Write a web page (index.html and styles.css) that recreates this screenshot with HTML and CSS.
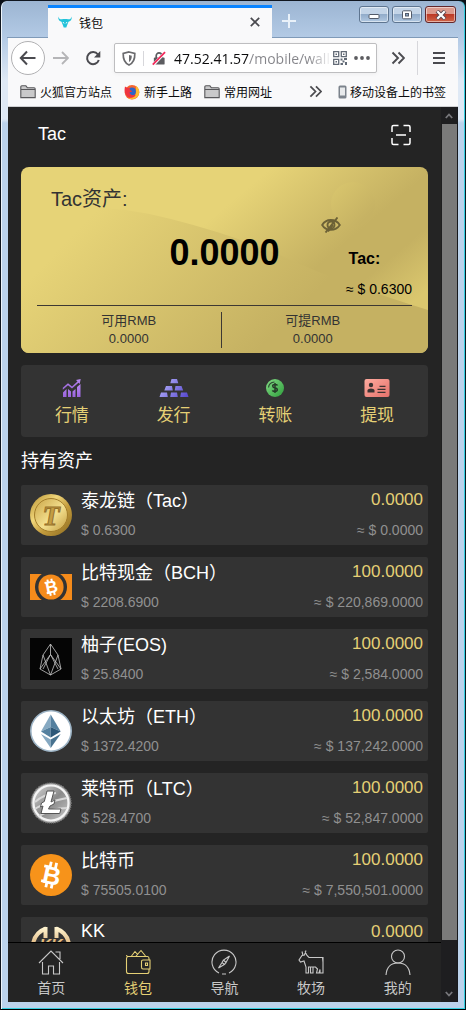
FILE: index.html
```html
<!DOCTYPE html>
<html lang="zh-CN">
<head>
<meta charset="utf-8">
<meta name="viewport" content="width=device-width, initial-scale=1">
<title>钱包</title>
<link rel="stylesheet" href="styles.css">
</head>
<body>
<svg class="defs" width="0" height="0" aria-hidden="true">
  <defs>
    <linearGradient id="purple" x1="0" y1="0" x2="0" y2="1"><stop offset="0" stop-color="#b98af0"/><stop offset="1" stop-color="#9a63dd"/></linearGradient>
    <linearGradient id="violet" gradientUnits="userSpaceOnUse" x1="2" y1="2" x2="28" y2="20"><stop offset="0" stop-color="#b5b2fa"/><stop offset="1" stop-color="#5748cf"/></linearGradient>
    <linearGradient id="green" x1="0" y1="0" x2="1" y2="1"><stop offset="0" stop-color="#84dc86"/><stop offset="1" stop-color="#2f9e3c"/></linearGradient>
    <linearGradient id="coral" x1="0" y1="0" x2="1" y2="1"><stop offset="0" stop-color="#ffab9f"/><stop offset="1" stop-color="#e4716b"/></linearGradient>
    <linearGradient id="gold" x1="0" y1="0" x2="1" y2="1"><stop offset="0" stop-color="#b18a2c"/><stop offset=".35" stop-color="#f0d67a"/><stop offset=".6" stop-color="#c39b3c"/><stop offset="1" stop-color="#8a6a20"/></linearGradient>
    <linearGradient id="gold-in" x1="0" y1="0" x2="1" y2="1"><stop offset="0" stop-color="#c9a446"/><stop offset=".55" stop-color="#f4e08f"/><stop offset="1" stop-color="#c39c3e"/></linearGradient>
    <linearGradient id="cream" gradientUnits="userSpaceOnUse" x1="0" y1="2" x2="0" y2="24"><stop offset="0" stop-color="#fff3cf"/><stop offset="1" stop-color="#d7a566"/></linearGradient>
    <linearGradient id="silver" x1="0" y1="0" x2="1" y2="1"><stop offset="0" stop-color="#d5d5d5"/><stop offset=".5" stop-color="#8a8a8a"/><stop offset="1" stop-color="#c9c9c9"/></linearGradient>
    <linearGradient id="card-wave" gradientUnits="userSpaceOnUse" x1="60" y1="60" x2="210" y2="210"><stop offset="0" stop-color="#e6d377"/><stop offset="1" stop-color="#c5b162"/></linearGradient>
    <linearGradient id="card-disc" x1="0" y1="0" x2=".8" y2=".8"><stop offset="0" stop-color="#dac76e"/><stop offset="1" stop-color="#c6b263"/></linearGradient>
    <symbol id="folder" viewBox="0 0 16 14"><path d="M.8 12.6V1.900q0-1.100 1.100-1.100h4l1.500 2h6.700q1.100 0 1.100 1.100v8.700zM1 4.500h14" fill="#c9c9ca" stroke="#58585b" stroke-width="1.100"/></symbol>
    <symbol id="chevrons" viewBox="0 0 14 14"><path d="M1.500 1.500 7 7l-5.500 5.500M7.500 1.500 13 7l-5.500 5.500" fill="none" stroke="#4c4c50" stroke-width="1.900"/></symbol>
  </defs>
</svg>

<div class="window">
  <header class="titlebar">
    <div class="tab">
      <svg class="tab-icon" viewBox="0 0 14 12"><path d="M.3.500C1 3.500 3 3.600 5 3h4c2 .6 4 .5 4.700-2.500.3 2.700-.5 4.500-3.200 5.200L9 9.500 8.300 11.600H5.700L5 9.500 3.500 5.700C.8 5 0 3.200.3.500z" fill="#22c3da"/><path d="m5 6 1 1.500M9 6 8 7.500" stroke="#f9f9fa"/></svg>
      <span class="tab-title">钱包</span>
      <button class="plain" aria-label="关闭标签页"><svg width="10" height="10" viewBox="0 0 10 10"><path d="m.8.8 8.400 8.400M9.200.8.800 9.200" stroke="#4a4a4f" stroke-width="1.700"/></svg></button>
    </div>
    <button class="plain new-tab" aria-label="新建标签页"><svg width="14" height="14" viewBox="0 0 14 14"><path d="M7 0v14M0 7h14" stroke="#e9f1f9" stroke-width="2"/></svg></button>
    <div class="win-buttons">
      <button class="win-btn" aria-label="最小化"><svg width="12" height="10" viewBox="0 0 12 10"><rect x="1" y="4.500" width="10" height="4" rx="1" fill="#fff" stroke="#535b69"/></svg></button>
      <button class="win-btn" aria-label="最大化"><svg width="12" height="10" viewBox="0 0 12 10"><rect x="1.500" y=".8" width="9" height="8" rx="1" fill="#fff" stroke="#535b69"/><rect x="4.500" y="3.500" width="3" height="2.500" fill="#8ba5c4" stroke="#535b69"/></svg></button>
      <button class="win-btn win-close" aria-label="关闭"><svg width="12" height="10" viewBox="0 0 12 10"><path d="m2 1 8 8M10 1 2 9" stroke="#5a4750" stroke-width="4"/><path d="m2.300 1.300 7.400 7.400m0-7.400L2.300 8.700" stroke="#fff" stroke-width="2.200"/></svg></button>
    </div>
  </header>

  <div class="toolbar">
    <button class="plain back" aria-label="后退"><svg width="18" height="16" viewBox="0 0 18 16"><path d="M8 1.500 1.800 8 8 14.500M2 8h14.500" fill="none" stroke="#4a4a4f" stroke-width="2"/></svg></button>
    <button class="plain forward" aria-label="前进"><svg width="16" height="14" viewBox="0 0 16 14"><path d="M9 1l6 6-6 6M14.500 7H0" fill="none" stroke="#b5b5b7" stroke-width="1.800"/></svg></button>
    <button class="plain reload" aria-label="刷新"><svg width="16" height="16" viewBox="0 0 16 16"><path d="M12.900 4.500A6 6 0 1 0 13.800 10" fill="none" stroke="#4a4a4f" stroke-width="2"/><path d="M15.300 1v6.400H9z" fill="#4a4a4f"/></svg></button>
    <div class="url-box">
      <svg class="shield" viewBox="0 0 14 15"><path d="M7 1 12.800 2.500c.2 6-1.300 9.500-5.800 11.500C2.500 12 1 8.500 1.200 2.500z" fill="none" stroke="#6a6a6d" stroke-width="1.700"/><path d="M7 4v7c2-1.200 2.700-3 2.800-6.200z" fill="#6a6a6d"/></svg>
      <svg class="lock" viewBox="0 0 15 15"><path d="M4.500 7V4.500a3 3 0 0 1 6 0V7" fill="none" stroke="#5c5c60" stroke-width="1.800"/><rect x="2" y="6.500" width="11.500" height="7.500" rx="1" fill="#5c5c60"/><path d="M1.200 14.500 14 1" stroke="#fff" stroke-width="3.200"/><path d="M.8 14 14 .8" stroke="#f2285a" stroke-width="1.900"/></svg>
      <input class="url" type="text" aria-label="地址" value="47.52.41.57/mobile/wallet">
      <svg class="qr" viewBox="0 0 14 14"><g fill="none" stroke="#626a76" stroke-width="1.300"><path d="M.7.700h5v5h-5zM8.300.700h5v5h-5zM.7 8.300h5v5h-5z"/></g><path d="M2.500 2.500h1.500v1.500H2.500zM10 2.500h1.500v1.500H10zM2.500 10h1.500v1.500H2.500zM7.500 7.500h2v2h-2zM11 7h3v2h-3zM9.500 9.500h2v2h-2zM12 11h2v3h-2zM7.500 12h2.500v2H7.500z" fill="#626a76"/></svg>
      <svg class="dots" viewBox="0 0 16 4"><g fill="#5c5c60"><circle cx="2" cy="2" r="1.900"/><circle cx="8" cy="2" r="1.900"/><circle cx="14" cy="2" r="1.900"/></g></svg>
    </div>
    <button class="plain overflow" aria-label="更多工具"><svg width="14" height="14"><use href="#chevrons"/></svg></button>
    <button class="plain menu-btn" aria-label="打开菜单"><svg width="12" height="12" viewBox="0 0 12 12"><path d="M0 1h12M0 6h12M0 11h12" stroke="#4a4a4f" stroke-width="1.800"/></svg></button>
  </div>

  <nav class="bookmarks">
    <a href="#"><svg width="16" height="14"><use href="#folder"/></svg>火狐官方站点</a>
    <a href="#"><svg width="16" height="16" viewBox="0 0 16 16"><circle cx="8" cy="8.300" r="7.300" fill="#f6642f"/><path d="M12 1.800c3.500 2.600 4.600 8 1 11.500-2.500 2.400-7 2.700-9.500.3 5 1.200 9-2 8.500-6.500z" fill="#fdbb30"/><circle cx="8" cy="7.500" r="3.900" fill="#2d65c8"/><path d="M1 2.500c-.9 4-.5 8 3.500 11 4 1 6.500-.8 7.200-2.800-3 1-5.700.3-6.200-2.200 1-.8 2-.5 2.800-1.300L6 6 5.500 3.800 3.500 4z" fill="#ef343f"/></svg>新手上路</a>
    <a href="#"><svg width="16" height="14"><use href="#folder"/></svg>常用网址</a>
    <button class="plain more-marks" aria-label="更多书签"><svg width="13" height="13"><use href="#chevrons"/></svg></button>
    <a class="mobile-marks" href="#"><svg width="9" height="14" viewBox="0 0 9 14"><rect x=".5" y=".5" width="8" height="13" rx="1.500" fill="#7c838c"/><path d="M2 2.500h5v8H2z" fill="#e8eaec"/></svg>移动设备上的书签</a>
  </nav>

  <div class="viewport">
    <main class="page">
      <div class="content">
        <div class="page-head">
          <h1>Tac</h1>
          <button class="plain" aria-label="扫一扫"><svg width="20" height="22" viewBox="0 0 20 22"><path d="M1 8V3Q1 1.500 2.500 1.500h5M12.500 1.500h5Q19 1.500 19 3v5M19 14v5q0 1.500-1.500 1.500h-5M7.500 20.500h-5Q1 20.500 1 19v-5" fill="none" stroke="#fff" stroke-width="1.500"/><path d="M5 11h10" stroke="#ccc" stroke-width="2"/></svg></button>
        </div>

        <section class="card">
          <svg class="card-art" viewBox="0 0 407 186" preserveAspectRatio="none" aria-hidden="true"><circle cx="332" cy="37" r="22" fill="url(#card-disc)"/><path d="M0 42Q80 34 150 52T270 93 407 143V186H0z" fill="url(#card-wave)"/></svg>
          <h2>Tac资产:</h2>
          <div class="card-main">
            <strong class="total">0.0000</strong>
            <div class="rate">
              <button class="plain eye" aria-label="隐藏余额"><svg width="20" height="16" viewBox="0 0 20 16"><g fill="none" stroke="#6c6136" stroke-width="1.900"><path d="M1.200 8C5 1.300 14.500 1.300 18.800 8 14.500 14.500 5 14.500 1.200 8z"/><circle cx="10" cy="8" r="3.500"/><path d="M4.500 15.500 16.500.5M7 14.500 12 8"/></g></svg></button>
              <b>Tac:</b>
              <span>≈ $ 0.6300</span>
            </div>
          </div>
          <dl class="card-foot">
            <div><dt>可用RMB</dt><dd>0.0000</dd></div>
            <div><dt>可提RMB</dt><dd>0.0000</dd></div>
          </dl>
        </section>

        <nav class="actions">
          <a href="#"><svg width="20" height="20" viewBox="0 0 20 20"><g fill="url(#purple)"><path d="M1 14.500 4.500 11v8H1zM6 11l3 2.500V19H6zM10.500 13.500 13.500 11v8h-3zM15 9l3.500-3v13H15z"/><path d="M.8 9.800 6 5.200l4 3.300 5.500-5L14 2l4.700-1-1 5-1.200-1.200L10 10.500 6 7.300.8 11.800z"/></g></svg>行情</a>
          <a href="#"><svg width="30" height="20" viewBox="0 0 30 20"><path d="M12.500 1h5.500l1.300 4.300h-8zM7 8h6l.8 4.500H5.300zM16.500 8h6l1.700 4.500h-8.500zM2 14.500h6l.8 4.500H.5zM12 14.500h6l.8 4.500h-7.600zM22 14.500h6l1.500 4.500h-8.300z" fill="url(#violet)"/></svg>发行</a>
          <a href="#"><svg width="20" height="20" viewBox="0 0 20 20"><circle cx="10" cy="10" r="9" fill="url(#green)"/><path d="M3.500 9.500Q4 4.500 9.500 4" fill="none" stroke="#2f4a33" stroke-width="1.200"/><path d="M12.500 7.500Q12 6.500 10 6.500c-3.200 0-3 3 0 3.400 3.200.4 3 3.600 0 3.600q-2 0-2.600-1.200M10 5v10" fill="none" stroke="#263b29" stroke-width="1.500"/></svg>转账</a>
          <a href="#"><svg width="26" height="20" viewBox="0 0 26 20"><rect x=".5" y="1" width="25" height="18" rx="2" fill="url(#coral)"/><g fill="#3a3232"><circle cx="7" cy="7" r="2.200"/><path d="M3.500 14.500v-2.500Q4 10.500 7 10.500t3.500 1.500v2.500z"/></g><path d="M15.500 8.300h6M13.500 11.300h8M13.500 14.300h8" stroke="#3a3232" stroke-width="1.300"/></svg>提现</a>
        </nav>

        <h3>持有资产</h3>
        <ul class="assets">
          <li>
            <svg class="coin" viewBox="0 0 42 42"><circle cx="21" cy="21" r="21" fill="url(#gold)"/><circle cx="21" cy="21" r="16.500" fill="url(#gold-in)" stroke="#a37d2a"/><text x="21" y="31" class="coin-t">T</text></svg>
            <span class="name">泰龙链（Tac）</span><span class="amount">0.0000</span>
            <span class="price">$ 0.6300</span><span class="value">≈ $ 0.0000</span>
          </li>
          <li>
            <svg class="coin" viewBox="0 0 42 42"><path d="M0 8h42v26H0z" fill="#f58b1b"/><circle cx="21" cy="21" r="16" fill="#333"/><path d="M12.500 5h17v3h-17zM12.500 34h17v3h-17z" fill="#333"/><circle cx="21" cy="21" r="12.600" fill="#f58b1b"/><g transform="rotate(-12 21 21)" stroke="#fff" stroke-width="2"><text x="21.500" y="27" class="coin-b small">B</text><path d="M19 13v3M23 13v3M19 26v3.500M23 26v3.500M15.500 15.800h3M15.500 26.200h3"/></g></svg>
            <span class="name">比特现金（BCH）</span><span class="amount">100.0000</span>
            <span class="price">$ 2208.6900</span><span class="value">≈ $ 220,869.0000</span>
          </li>
          <li>
            <svg class="coin" viewBox="0 0 42 42"><path d="M0 0h42v42H0z" fill="#050505"/><path d="M20.500 6 13 17l-3 14 10.500 6L31 31l-3-14zM13 17l7.500 20L28 17M20.500 6v10.500M20.500 16.500 13 31M20.500 16.500 28 31M10 31l10.500-14.500L31 31" fill="none" stroke="#c4c4c4" stroke-width=".8"/></svg>
            <span class="name">柚子(EOS)</span><span class="amount">100.0000</span>
            <span class="price">$ 25.8400</span><span class="value">≈ $ 2,584.0000</span>
          </li>
          <li>
            <svg class="coin" viewBox="0 0 42 42"><circle cx="21" cy="21" r="20.200" fill="#fff" stroke="#9db4c6" stroke-width="1.600"/><path d="M20.700 4.500 11 21.500l9.700-4.500z" fill="#86a9c2"/><path d="M20.700 4.500v12.500l10 4.500z" fill="#54809f"/><path d="m11 21.500 9.700-4.500v10.500z" fill="#54809f"/><path d="m30.700 21.500-10-4.500v10.500z" fill="#2e5878"/><path d="m11 24 9.700 5.500V38z" fill="#86a9c2"/><path d="m30.700 24-10 5.500V38z" fill="#47728f"/></svg>
            <span class="name">以太坊（ETH）</span><span class="amount">100.0000</span>
            <span class="price">$ 1372.4200</span><span class="value">≈ $ 137,242.0000</span>
          </li>
          <li>
            <svg class="coin" viewBox="0 0 42 42"><circle cx="21" cy="21" r="20" fill="#aaa" stroke="#777" stroke-width="1.500" stroke-dasharray="1 1"/><circle cx="21" cy="21" r="17.500" fill="url(#silver)" stroke="#f4f4f4" stroke-width="2.200"/><path d="M5 20q9-8 21-9M5 27q8-6 32-11M9 34q13-8 28-8" fill="none" stroke="#d8d8d8" stroke-width="2"/><path d="M17 9h7l-3 11 4-2-1 4-4 2-1.500 3H31l-1.300 4.500H11l2-7.500-2.500 1 1-4 2.800-1.500z" fill="#fff" stroke="#555"/></svg>
            <span class="name">莱特币（LTC）</span><span class="amount">100.0000</span>
            <span class="price">$ 528.4700</span><span class="value">≈ $ 52,847.0000</span>
          </li>
          <li>
            <svg class="coin" viewBox="0 0 42 42"><circle cx="21" cy="21" r="21" fill="#f7931a"/><g transform="rotate(12 21 21)" stroke="#fff" stroke-width="2.800"><text x="22" y="30" class="coin-b">B</text><path d="M18.500 8v6M24 8v6M18.500 28v6M24 28v6M12.500 13.500h5M12.500 28.600h5"/></g></svg>
            <span class="name">比特币</span><span class="amount">100.0000</span>
            <span class="price">$ 75505.0100</span><span class="value">≈ $ 7,550,501.0000</span>
          </li>
          <li>
            <svg class="coin" viewBox="0 0 42 42"><path d="M15.500 1v11M26.500 1v11M16 2.500A20 20 0 0 0 3 18M26 2.500A20 20 0 0 1 39 18" fill="none" stroke="url(#cream)" stroke-width="4"/><text x="21" y="25" class="coin-k">KK</text></svg>
            <span class="name">KK</span><span class="amount">0.0000</span>
            <span class="price">$ 0.0000</span><span class="value">≈ $ 0.0000</span>
          </li>
        </ul>
      </div>

      <nav class="tabbar">
        <a href="#"><svg viewBox="0 0 26 26"><path d="M1 14 13 2l12 12M17.500 3h4.500v7M4.500 13v12h6v-8h5v8h6V13" /></svg>首页</a>
        <a href="#" class="active"><svg viewBox="0 0 26 26"><path d="M24 11V9.500Q24 7.500 22.500 7.500H3Q1.500 7.500 1.500 6M3 7.500Q1.500 8 1.500 9.500V22.500Q1.500 24.500 3.500 24.500H22q2 0 2-2V20M25 11h-7q-1.500 0-1.500 1.500v5.500q0 2 1.500 2h7zM20.500 14h2v2.500h-2zM6.500 7 10 2.500 13 6M11 7l5-5.500L20.500 7"/></svg>钱包</a>
        <a href="#"><svg viewBox="0 0 26 26"><path d="M8 24A12 12 0 1 1 18 24M11 25h4M18.500 7 12.500 11l2.500 2.500zM7.500 19l3.500-5.500 2.500 2zM11 13.500l1.500-2.500M13.500 15.500l1.500-2"/></svg>导航</a>
        <a href="#"><svg viewBox="0 0 26 26"><path d="M8 1.500 6.500 6 4 6.500 1 11l1.500 2L6 12l2 6v6h2.500v-6h7l2 2-1 4h2.500l1-3.500V24h3V8.500H11L9 6.500 7 2.500M4 2.500l1 4M12.500 18v6H15v-6M24.500 8.500l.5 5"/></svg>牧场</a>
        <a href="#"><svg viewBox="0 0 26 26"><circle cx="13" cy="7.500" r="6.500"/><path d="M1 26Q2 14 13 14t12 12"/></svg>我的</a>
      </nav>
    </main>
    <div class="scrollbar" aria-hidden="true">
      <span class="arrow"><svg width="8" height="6" viewBox="0 0 8 6"><path d="m.8 5 3.200-3.500L7.200 5" fill="none" stroke="#77777b" stroke-width="1.800"/></svg></span>
      <span class="thumb"></span>
      <span class="track"></span>
      <span class="arrow"><svg width="8" height="6" viewBox="0 0 8 6"><path d="m.8 1 3.200 3.500L7.200 1" fill="none" stroke="#77777b" stroke-width="1.800"/></svg></span>
    </div>
  </div>
</div>
</body>
</html>
```
FILE: styles.css
```css
* { box-sizing: border-box; }

body {
  margin: 0;
  background: #0a0f16;
  color: #fff;
  font-family: "Liberation Sans", "Noto Sans CJK SC", sans-serif;
}

h1, h2, h3, dl, dd, ul { margin: 0; padding: 0; font-weight: 400; }
a { color: inherit; text-decoration: none; }
svg { display: block; flex: none; }
.defs { position: absolute; }

.plain {
  display: flex;
  align-items: center;
  justify-content: center;
  padding: 0;
  border: 0;
  background: none;
}

/* Window frame */
.window {
  display: flex;
  flex-direction: column;
  height: 100vh;
  padding: 0 7px 7px 6px;
  border: 1px solid #10161f;
  border-right-color: #0b1a22;
  border-bottom: 1px solid #000;
  border-radius: 7px 7px 0 0;
  background: linear-gradient(#9cb5d2, #b4cbe6 38px, #dfe9f5 80px, #dfe9f5 118px, #bcd3ec 122px, #bcd3ec);
  box-shadow: inset 1px 0 #eef5fb, inset -1px 0 #35cfe0, inset 0 -1px #35cfe0;
}

.titlebar {
  display: flex;
  flex: none;
  height: 37px;
  padding-top: 4px;
  padding-left: 41px;
  border-bottom: 1px solid #7f9ab8;
  color: #0c0c0d;
}

.tab {
  display: flex;
  align-items: center;
  flex: 0 1 224px;
  gap: 7px;
  height: 33px;
  padding: 0 12px 2px 10px;
  border-top: 3px solid #0a84ff;
  background: #f9f9fa;
  font-size: 12px;
}
.tab-icon { width: 14px; height: 12px; }
.tab-title { flex: 1; }
.new-tab { align-self: center; width: 34px; }

.win-buttons {
  display: flex;
  gap: 3px;
  margin-left: auto;
  padding: 1px 2px 0 0;
}
.win-btn {
  display: flex;
  align-items: center;
  justify-content: center;
  width: 30px;
  height: 17px;
  padding: 0;
  border: 1px solid #5e7590;
  border-radius: 3px;
  background: linear-gradient(#c3d4e7 48%, #92acca 50%, #b1c8e1);
  box-shadow: inset 0 0 0 1px #ffffff80;
}
.win-close { width: 31px; border-color: #64262a; background: linear-gradient(#dc9a8d 48%, #bd3a26 50%, #cf6549); }

.toolbar {
  display: flex;
  align-items: center;
  flex: none;
  height: 41px;
  margin-left: 1px;
  padding: 0 13px 1px 3px;
  background: #f9f9fa;
}
.back {
  flex: none;
  width: 34px;
  height: 34px;
  border: 1px solid #b1b1b3;
  border-radius: 50%;
  background: #fff;
}
.forward { width: 16px; margin-left: 8px; }
.reload { width: 16px; margin: 0 13px 0 16px; }

.url-box {
  display: flex;
  align-items: center;
  flex: 1;
  min-width: 0;
  height: 30px;
  padding: 0 6px 0 7px;
  border: 1px solid #bebec0;
  border-radius: 2px;
  background: #fff;
  box-shadow: 0 1px 4px #0000000d;
}
.shield { width: 14px; height: 15px; }
.lock { width: 23px; height: 15px; margin-left: 7px; padding-left: 8px; border-left: 1px solid #d7d7db; }
.url {
  flex: 1;
  min-width: 0;
  height: 26px;
  margin: 0 0 0 8px;
  padding: 0;
  border: 0;
  outline: 0;
  background: linear-gradient(90deg, #0c0c0d 75px, #85858a 75px, #85858a 135px, #85858a00 158px);
  background-clip: text;
  -webkit-background-clip: text;
  color: transparent;
  font: 14px "Open Sans", sans-serif;
}
.qr { width: 14px; height: 14px; }
.dots { width: 16px; height: 4px; margin-left: 7px; }
.overflow { width: 14px; margin-left: 14px; }
.menu-btn { height: 34px; margin-left: 12px; padding-left: 15px; border-left: 1px solid #d7d7db; }

.bookmarks {
  display: flex;
  align-items: center;
  flex: none;
  gap: 12px;
  height: 28px;
  margin-left: 1px;
  padding: 0 12px 2px 12px;
  border-bottom: 1px solid #cfd0d2;
  background: #f9f9fa;
  color: #0c0c0d;
  font-size: 12px;
  white-space: nowrap;
}
.bookmarks a { display: flex; align-items: center; gap: 4px; }
.more-marks { margin-left: auto; }
.bookmarks .mobile-marks { gap: 3px; margin-left: 4px; }

/* Page viewport */
.viewport {
  display: flex;
  flex: 1;
  min-height: 0;
  margin-left: 1px;
  border-right: 1px solid #17191d;
  background: #242424;
}
.page { display: flex; flex-direction: column; flex: 1; min-width: 0; }
.content { flex: 1; min-height: 0; overflow: hidden; padding: 0 13px; }

.scrollbar {
  display: flex;
  flex-direction: column;
  flex: none;
  width: 16px;
  background: #1e1e20;
}
.arrow { display: flex; align-items: center; justify-content: center; flex: none; height: 17px; }
.thumb { flex: 816; margin-left: 1px; background: #7a7a7a; }
.track { flex: 45; }

.page-head {
  display: flex;
  align-items: center;
  justify-content: space-between;
  height: 60px;
  padding: 0 17px;
}
.page-head h1 { padding-bottom: 6px; font-size: 18px; }
.page-head button { padding-bottom: 4px; }

.card {
  position: relative;
  z-index: 0;
  height: 186px;
  padding: 16px;
  overflow: hidden;
  border-radius: 8px;
  background: linear-gradient(140deg, #e6d377 40%, #c5b162 66%, #c5b162 76%, #dac76e 88%);
  color: #333;
}
.card-art { position: absolute; inset: 0; z-index: -1; width: 100%; height: 100%; }
.card h2 { padding-left: 14px; font-size: 20px; line-height: 32px; }
.card-main {
  display: grid;
  grid-template-columns: 1fr auto 1fr;
  height: 91px;
  border-bottom: 1px solid #3d3833;
  color: #000;
}
.total { grid-column: 2; font-size: 36px; line-height: 76px; }
.rate { display: flex; flex-direction: column; font-size: 14px; line-height: 24px; }
.eye { width: 20px; height: 16px; margin: 2px 0 14px 41px; }
.rate b { margin-left: 69px; font-size: 16px; }
.rate span { margin-top: 6px; text-align: right; }

.card-foot {
  display: grid;
  grid-template-columns: 1fr 1fr;
  margin-top: 6px;
  padding-right: 8px;
  font-size: 13px;
  line-height: 18px;
  text-align: center;
}
.card-foot div + div { border-left: 1px solid #3d3833; }

.actions {
  display: grid;
  grid-template-columns: repeat(4, 1fr);
  height: 72px;
  margin-top: 12px;
  border-radius: 4px;
  background: #333;
  color: #e5d075;
  font-size: 17px;
  line-height: 24px;
}
.actions a { display: flex; flex-direction: column; align-items: center; gap: 6px; padding-top: 13px; }

.content h3 { padding: 10px 0; font-size: 18px; line-height: 28px; }

.assets { display: grid; gap: 12px; list-style: none; }
.assets li {
  display: grid;
  grid-template: 30px 30px / 42px auto 1fr;
  column-gap: 9px;
  align-items: center;
  height: 60px;
  padding: 0 5px 0 9px;
  border-radius: 2px;
  background: #333;
  white-space: nowrap;
}
.coin { grid-row: span 2; width: 42px; height: 42px; }
.name { grid-column: 2; padding-bottom: 2px; font-size: 18px; }
.price { grid-column: 2; color: #909090; font-size: 14px; }
.amount, .value { grid-column: 3; text-align: right; }
.amount { color: #e5d075; font-size: 17px; }
.value { color: #909090; font-size: 14px; }

.coin-t { fill: #c49d43; stroke: #95702a; stroke-width: 1; font: italic bold 28px "Liberation Serif", serif; text-anchor: middle; }
.coin-b { fill: #fff; stroke: none; font: bold 25px "Liberation Sans", sans-serif; text-anchor: middle; }
.coin-b.small { font-size: 17px; }
.coin-k { fill: #e3bc7e; font: italic bold 16px "Liberation Sans", sans-serif; text-anchor: middle; }

.tabbar {
  display: grid;
  grid-template-columns: repeat(5, 1fr);
  flex: none;
  height: 60px;
  border-top: 1px solid #000;
  background: #242424;
  color: #c8c8c8;
  font-size: 14px;
  line-height: 20px;
}
.tabbar a { display: flex; flex-direction: column; align-items: center; gap: 3px; padding-top: 6px; }
.tabbar svg { width: 26px; height: 26px; fill: none; stroke: currentColor; stroke-width: 1.1; }
.tabbar .active { color: #e5d075; }
```
